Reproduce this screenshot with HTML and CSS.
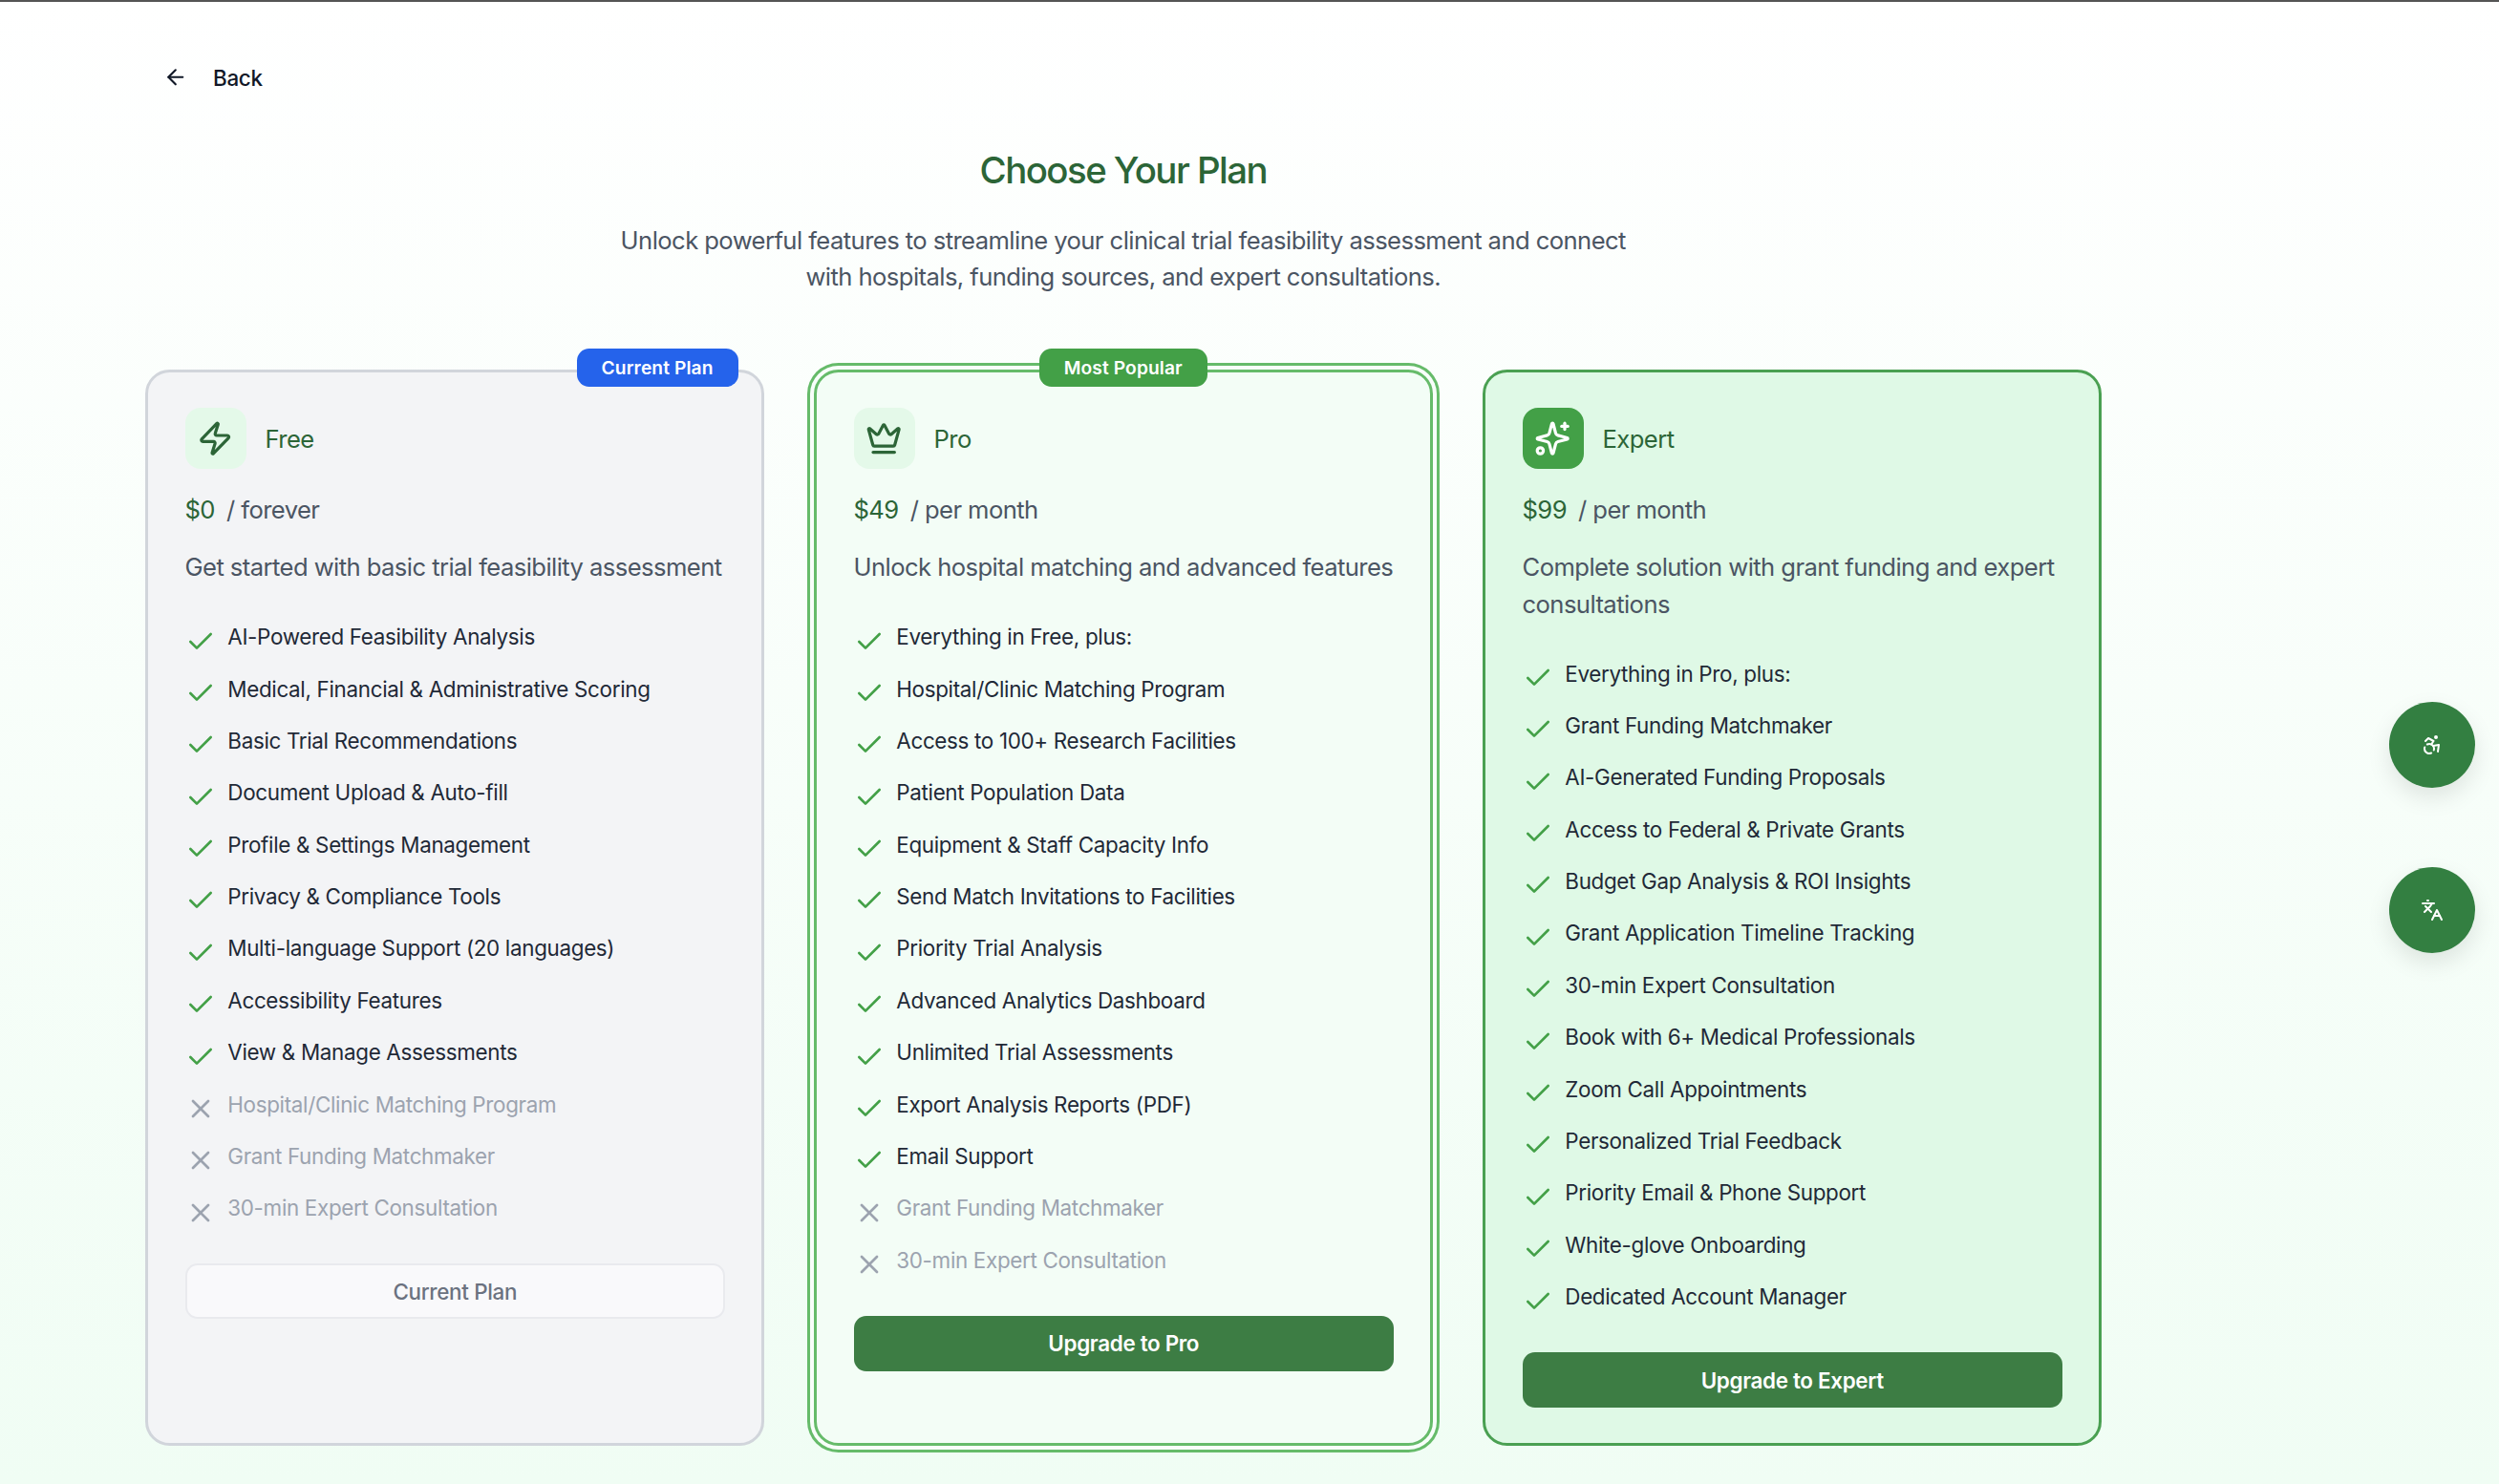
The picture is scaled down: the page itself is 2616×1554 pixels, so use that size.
FILE: index.html
```html
<!DOCTYPE html>
<html lang="en">
<head>
    <meta charset="UTF-8" />
    <meta name="viewport" content="width=device-width, initial-scale=1.0" />
    <title>Choose Your Plan</title>
    <link rel="stylesheet" href="styles.css">
</head>
<body>

    <svg class="icon-defs" aria-hidden="true">
        <symbol id="i-check" viewBox="0 0 24 24"><path d="M20 6 9 17l-5-5"/></symbol>
        <symbol id="i-x" viewBox="0 0 24 24"><path d="M18 6 6 18"/><path d="m6 6 12 12"/></symbol>
    </svg>

    <div class="top-line"></div>

    <div class="page">
        <a class="back">
            <svg class="back-icon" viewBox="0 0 24 24"><path d="m12 19-7-7 7-7"/><path d="M19 12H5"/></svg>
            <span>Back</span>
        </a>

        <h1 class="title">Choose Your Plan</h1>
        <p class="subtitle">Unlock powerful features to streamline your clinical trial feasibility assessment and connect with hospitals, funding sources, and expert consultations.</p>

        <div class="plans">

            <div class="plan plan-free">
                <span class="badge badge-current">Current Plan</span>
                <div class="plan-header">
                    <div class="plan-icon">
                        <svg viewBox="0 0 24 24"><path d="M4 14a1 1 0 0 1-.78-1.63l9.9-10.2a.5.5 0 0 1 .86.46l-1.92 6.02A1 1 0 0 0 13 10h7a1 1 0 0 1 .78 1.63l-9.9 10.2a.5.5 0 0 1-.86-.46l1.92-6.02A1 1 0 0 0 11 14z"/></svg>
                    </div>
                    <span class="plan-name">Free</span>
                </div>
                <div class="plan-price"><span class="amount">$0</span><span class="period">/ forever</span></div>
                <p class="plan-desc">Get started with basic trial feasibility assessment</p>
                <ul class="features">
                    <li><svg><use href="#i-check"/></svg>AI-Powered Feasibility Analysis</li>
                    <li><svg><use href="#i-check"/></svg>Medical, Financial &amp; Administrative Scoring</li>
                    <li><svg><use href="#i-check"/></svg>Basic Trial Recommendations</li>
                    <li><svg><use href="#i-check"/></svg>Document Upload &amp; Auto-fill</li>
                    <li><svg><use href="#i-check"/></svg>Profile &amp; Settings Management</li>
                    <li><svg><use href="#i-check"/></svg>Privacy &amp; Compliance Tools</li>
                    <li><svg><use href="#i-check"/></svg>Multi-language Support (20 languages)</li>
                    <li><svg><use href="#i-check"/></svg>Accessibility Features</li>
                    <li><svg><use href="#i-check"/></svg>View &amp; Manage Assessments</li>
                    <li class="off"><svg><use href="#i-x"/></svg>Hospital/Clinic Matching Program</li>
                    <li class="off"><svg><use href="#i-x"/></svg>Grant Funding Matchmaker</li>
                    <li class="off"><svg><use href="#i-x"/></svg>30-min Expert Consultation</li>
                </ul>
                <button class="plan-btn btn-current">Current Plan</button>
            </div>

            <div class="plan plan-pro">
                <span class="badge badge-popular">Most Popular</span>
                <div class="plan-header">
                    <div class="plan-icon">
                        <svg viewBox="0 0 24 24"><path d="M11.562 3.266a.5.5 0 0 1 .876 0L15.39 8.87a1 1 0 0 0 1.516.294L21.183 5.5a.5.5 0 0 1 .798.519l-2.834 10.246a1 1 0 0 1-.956.734H5.81a1 1 0 0 1-.957-.734L2.02 6.02a.5.5 0 0 1 .798-.519l4.276 3.664a1 1 0 0 0 1.516-.294z"/><path d="M5 21h14"/></svg>
                    </div>
                    <span class="plan-name">Pro</span>
                </div>
                <div class="plan-price"><span class="amount">$49</span><span class="period">/ per month</span></div>
                <p class="plan-desc">Unlock hospital matching and advanced features</p>
                <ul class="features">
                    <li><svg><use href="#i-check"/></svg>Everything in Free, plus:</li>
                    <li><svg><use href="#i-check"/></svg>Hospital/Clinic Matching Program</li>
                    <li><svg><use href="#i-check"/></svg>Access to 100+ Research Facilities</li>
                    <li><svg><use href="#i-check"/></svg>Patient Population Data</li>
                    <li><svg><use href="#i-check"/></svg>Equipment &amp; Staff Capacity Info</li>
                    <li><svg><use href="#i-check"/></svg>Send Match Invitations to Facilities</li>
                    <li><svg><use href="#i-check"/></svg>Priority Trial Analysis</li>
                    <li><svg><use href="#i-check"/></svg>Advanced Analytics Dashboard</li>
                    <li><svg><use href="#i-check"/></svg>Unlimited Trial Assessments</li>
                    <li><svg><use href="#i-check"/></svg>Export Analysis Reports (PDF)</li>
                    <li><svg><use href="#i-check"/></svg>Email Support</li>
                    <li class="off"><svg><use href="#i-x"/></svg>Grant Funding Matchmaker</li>
                    <li class="off"><svg><use href="#i-x"/></svg>30-min Expert Consultation</li>
                </ul>
                <button class="plan-btn">Upgrade to Pro</button>
            </div>

            <div class="plan plan-expert">
                <div class="plan-header">
                    <div class="plan-icon">
                        <svg viewBox="0 0 24 24"><path d="M9.937 15.5A2 2 0 0 0 8.5 14.063l-6.135-1.582a.5.5 0 0 1 0-.962L8.5 9.936A2 2 0 0 0 9.937 8.5l1.582-6.135a.5.5 0 0 1 .963 0L14.063 8.5A2 2 0 0 0 15.5 9.937l6.135 1.581a.5.5 0 0 1 0 .964L15.5 14.063a2 2 0 0 0-1.437 1.437l-1.582 6.135a.5.5 0 0 1-.963 0z"/><path d="M20 2v4"/><path d="M22 4h-4"/><circle cx="4" cy="20" r="2"/></svg>
                    </div>
                    <span class="plan-name">Expert</span>
                </div>
                <div class="plan-price"><span class="amount">$99</span><span class="period">/ per month</span></div>
                <p class="plan-desc">Complete solution with grant funding and expert consultations</p>
                <ul class="features">
                    <li><svg><use href="#i-check"/></svg>Everything in Pro, plus:</li>
                    <li><svg><use href="#i-check"/></svg>Grant Funding Matchmaker</li>
                    <li><svg><use href="#i-check"/></svg>AI-Generated Funding Proposals</li>
                    <li><svg><use href="#i-check"/></svg>Access to Federal &amp; Private Grants</li>
                    <li><svg><use href="#i-check"/></svg>Budget Gap Analysis &amp; ROI Insights</li>
                    <li><svg><use href="#i-check"/></svg>Grant Application Timeline Tracking</li>
                    <li><svg><use href="#i-check"/></svg>30-min Expert Consultation</li>
                    <li><svg><use href="#i-check"/></svg>Book with 6+ Medical Professionals</li>
                    <li><svg><use href="#i-check"/></svg>Zoom Call Appointments</li>
                    <li><svg><use href="#i-check"/></svg>Personalized Trial Feedback</li>
                    <li><svg><use href="#i-check"/></svg>Priority Email &amp; Phone Support</li>
                    <li><svg><use href="#i-check"/></svg>White-glove Onboarding</li>
                    <li><svg><use href="#i-check"/></svg>Dedicated Account Manager</li>
                </ul>
                <button class="plan-btn">Upgrade to Expert</button>
            </div>

        </div>
    </div>

    <div class="fabs">
        <button class="fab">
            <svg viewBox="0 0 24 24"><circle cx="16" cy="4" r="1"/><path d="m18 19 1-7-6 1"/><path d="m5 8 3-3 5.5 3-2.36 3.5"/><path d="M4.24 14.5a5 5 0 0 0 6.88 6"/><path d="M13.76 17.5a5 5 0 0 0-6.88-6"/></svg>
        </button>
        <button class="fab">
            <svg class="fab-lang" viewBox="0 0 24 24"><path d="m5 8 6 6"/><path d="m4 14 6-6 2-3"/><path d="M2 5h12"/><path d="M7 2h1"/><path d="m22 22-5-10-5 10"/><path d="M14 18h6"/></svg>
        </button>
    </div>

</body>
</html>
```

FILE: styles.css
```css
* {
    box-sizing: border-box;
}

body {
    font-family: Inter, "Liberation Sans", sans-serif;
    letter-spacing: -0.02em;
    margin: 0;
    padding: 0;
    height: 1554px;
    overflow: hidden;
    position: relative;
    background: linear-gradient(180deg, #ffffff 0%, #f0fdf4 100%);
}

.icon-defs {
    display: none;
}

.top-line {
    height: 2px;
    background-color: #555;
}

.page {
    width: 2199.5px;
    padding: 61px 0 0 152px;
}

.back {
    display: flex;
    align-items: center;
    gap: 27px;
    margin-left: 18.5px;
    height: 36px;
    font-size: 22.4px;
    font-weight: 500;
    color: #111827;
}

.back-icon {
    width: 25.6px;
    height: 25.6px;
    fill: none;
    stroke: #111827;
    stroke-width: 2;
    stroke-linecap: round;
    stroke-linejoin: round;
}

.title {
    margin: 55px 0 0;
    font-size: 38.4px;
    line-height: 48px;
    font-weight: 500;
    letter-spacing: -0.04em;
    text-align: center;
    color: #2c6537;
}

.subtitle {
    width: 1075px;
    margin: 31px auto 0;
    font-size: 25.6px;
    line-height: 38.4px;
    letter-spacing: -0.022em;
    text-align: center;
    color: #4b5563;
}

.plans {
    display: grid;
    grid-template-columns: repeat(3, 1fr);
    gap: 52.5px;
    margin-top: 77px;
}

.plan {
    position: relative;
    padding: 37px 37.5px 37px 38.5px;
    border: 3px solid #d1d5db;
    border-radius: 25.6px;
    background-color: #f3f4f6;
}

.plan-pro {
    border-color: #66bb6a;
    background-color: #f3fdf6;
    box-shadow: 0 0 0 4px #f8fefa, 0 0 0 7px #66bb6a;
}

.plan-expert {
    border-color: #4aa052;
    background-color: #dff9e6;
}

.badge {
    position: absolute;
    top: -25px;
    height: 40px;
    padding: 0 26px;
    display: flex;
    align-items: center;
    border-radius: 12.8px;
    font-size: 19.2px;
    font-weight: 600;
    letter-spacing: 0.005em;
    color: #fff;
}

.badge-current {
    right: 24px;
    background-color: #2563eb;
}

.badge-popular {
    left: 50%;
    transform: translateX(-50%);
    background-color: #43a047;
}

.plan-header {
    display: flex;
    align-items: center;
    gap: 20px;
}

.plan-icon {
    width: 64px;
    height: 64px;
    display: flex;
    align-items: center;
    justify-content: center;
    border-radius: 16px;
    background-color: #e4f9e9;
}

.plan-icon svg {
    width: 38.4px;
    height: 38.4px;
    fill: none;
    stroke: #2c6537;
    stroke-width: 2;
    stroke-linecap: round;
    stroke-linejoin: round;
}

.plan-expert .plan-icon {
    background-color: #43a047;
}

.plan-expert .plan-icon svg {
    stroke: #fff;
}

.plan-name {
    padding-top: 2px;
    font-size: 25.6px;
    letter-spacing: -0.022em;
    color: #2c6537;
}

.plan-price {
    display: flex;
    gap: 12px;
    margin-top: 24px;
    font-size: 25.6px;
    line-height: 38.4px;
    letter-spacing: -0.022em;
}

.amount {
    color: #2c6537;
}

.period {
    color: #4b5563;
}

.plan-desc {
    margin: 22px 0 0;
    font-size: 25.6px;
    line-height: 38.4px;
    letter-spacing: -0.022em;
    color: #4b5563;
}

.features {
    list-style: none;
    margin: 35.5px 0 0;
    padding: 0;
    display: flex;
    flex-direction: column;
    gap: 16px;
}

.features li {
    display: flex;
    gap: 12.8px;
    font-size: 22.4px;
    line-height: 35.2px;
    color: #1f2937;
}

.features svg {
    flex: none;
    width: 32px;
    height: 32px;
    margin-top: 6.4px;
    fill: none;
    stroke: #43a047;
    stroke-width: 2;
    stroke-linecap: round;
    stroke-linejoin: round;
}

.features li.off {
    color: #9ca3af;
}

.features li.off svg {
    stroke: #9ca3af;
}

.plan-btn {
    display: block;
    width: 100%;
    height: 58px;
    margin-top: 37.5px;
    border: none;
    border-radius: 12.8px;
    background-color: #3d7d44;
    color: #fff;
    font-family: inherit;
    font-size: 22.4px;
    font-weight: 600;
    letter-spacing: inherit;
}

.btn-current {
    border: 2px solid #e9eaee;
    background-color: #f9f9fb;
    color: #6b7280;
    font-weight: 500;
}

.fabs {
    position: absolute;
    top: 735px;
    right: 25px;
    display: flex;
    flex-direction: column;
    gap: 83px;
}

.fab {
    width: 90px;
    height: 90px;
    padding: 0;
    border: none;
    border-radius: 50%;
    display: flex;
    align-items: center;
    justify-content: center;
    background-color: #337f41;
    box-shadow: 0 10px 24px rgba(0, 0, 0, 0.1);
}

.fab svg {
    width: 24px;
    height: 24px;
    fill: none;
    stroke: #fff;
    stroke-width: 2;
    stroke-linecap: round;
    stroke-linejoin: round;
}
```
